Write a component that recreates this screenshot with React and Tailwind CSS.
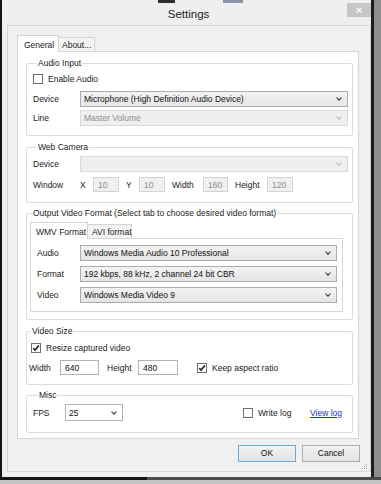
import React from 'react';
import clsx from 'clsx';

function Chevron({ disabled }) {
  return (
    <svg width="6" height="4" viewBox="0 0 6 4" className="shrink-0">
      <path d="M0.5 0.5 L3 3.2 L5.5 0.5" fill="none" stroke={disabled ? '#b9b9b9' : '#333'} strokeWidth="1.1" />
    </svg>
  );
}

function Combo({ value, className, disabled, white }) {
  return (
    <div
      className={clsx(
        'flex items-center justify-between border pl-[3px] pr-[5px]',
        disabled
          ? 'border-[#dadada] bg-[#efefef] text-[#8d8d8d]'
          : white
          ? 'border-[#b3b3b3] bg-white text-[#111]'
          : 'border-[#acacac] bg-linear-to-b from-[#f3f3f3] to-[#e5e5e5] text-[#111]',
        className
      )}
    >
      <span className="truncate">{value}</span>
      <Chevron disabled={disabled} />
    </div>
  );
}

function Field({ value, className, disabled }) {
  return (
    <div
      className={clsx(
        'flex items-center border pl-[4px] h-[15px]',
        disabled ? 'border-[#d3d3d3] bg-[#f0f0f0] text-[#8d8d8d]' : 'border-[#b3b3b3] bg-white text-[#111]',
        className
      )}
    >
      {value}
    </div>
  );
}

function Check({ checked }) {
  return (
    <span className="flex items-center justify-center w-[10px] h-[10px] border border-[#6f6f6f] bg-white shrink-0">
      {checked && (
        <svg width="8" height="8" viewBox="0 0 8 8">
          <path d="M1.2 4.2 L3.1 6.1 L6.9 1.4" fill="none" stroke="#1e1e1e" strokeWidth="1.6" />
        </svg>
      )}
    </span>
  );
}

export default function App() {
  return (
    <div className="w-[381px] h-[484px] flex flex-col bg-[#bdbdbd] font-['Liberation_Sans',Arial,sans-serif] text-[8.5px] leading-[10px] text-[#1a1a1a] whitespace-nowrap overflow-hidden">
      <div className="flex h-[477px]">
        <div className="w-[2px] bg-[#151515]" />

        {/* window */}
        <div className="w-[369px] flex flex-col bg-[#efefef] relative">
          <div className="absolute top-0 left-[156px] w-[17px] h-[3px] bg-[#2d2d2d]" />
          <div className="absolute top-0 left-[221px] w-[20px] h-[3px] bg-[#8797a8]" />

          <div className="grid grid-cols-[1fr_auto_1fr] h-[25px]">
            <div />
            <div className="pl-[4px] pt-[7px] text-[11.5px] leading-[14px] text-[#222]">Settings</div>
            <div className="flex justify-end">
              <div className="mt-[3px] w-[24px] h-[14px] bg-[#c7c7c7] flex items-center justify-center text-white text-[11px] leading-[11px] font-bold">
                ×
              </div>
            </div>
          </div>

          {/* client area */}
          <div className="ml-[5px] w-[364px] h-[447px] border border-[#d6d6d6] bg-[#f0f0f0] flex flex-col pl-[9px] pt-[9px]">
            {/* tabs */}
            <div className="flex items-end h-[16px]">
              <div className="relative z-10 -mb-px h-[17px] w-[42px] border border-b-0 border-[#d3d3d3] bg-white pl-[6px] pt-[4px]">
                General
              </div>
              <div className="h-[14px] w-[36px] border border-l-0 border-b-0 border-[#d3d3d3] bg-[#f4f4f4] pl-[3px] pt-[2px]">
                About...
              </div>
            </div>

            <div className="w-[342px] h-[388px] border border-[#d6d6d6] bg-white pl-[8px] flex flex-col">
              {/* Audio Input */}
              <fieldset className="mt-[6px] w-[327px] border border-[#dcdcdc] rounded-[2px] pl-[6px] pr-[4px] pb-[9px]">
                <legend className="ml-[4px] px-[1px] leading-[10px]">Audio Input</legend>
                <div className="mt-[6px] h-[10px] flex items-center">
                  <Check />
                  <span className="ml-[5px]">Enable Audio</span>
                </div>
                <div className="mt-[7px] flex items-center">
                  <span className="w-[47px]">Device</span>
                  <Combo value="Microphone (High Definition Audio Device)" className="w-[268px] h-[16px]" />
                </div>
                <div className="mt-[3px] flex items-center">
                  <span className="w-[47px]">Line</span>
                  <Combo value="Master Volume" disabled className="w-[268px] h-[16px]" />
                </div>
              </fieldset>

              {/* Web Camera */}
              <fieldset className="mt-[6px] w-[327px] border border-[#dcdcdc] rounded-[2px] pl-[6px] pr-[4px] pb-[10px]">
                <legend className="ml-[4px] px-[1px] leading-[10px]">Web Camera</legend>
                <div className="mt-[4px] flex items-center">
                  <span className="w-[47px]">Device</span>
                  <Combo value="" disabled className="w-[268px] h-[16px]" />
                </div>
                <div className="mt-[5px] flex items-center h-[15px]">
                  <span className="w-[47px]">Window</span>
                  <span className="w-[13px]">X</span>
                  <Field value="10" disabled className="w-[26px]" />
                  <span className="ml-[7px] w-[13px]">Y</span>
                  <Field value="10" disabled className="w-[26px]" />
                  <span className="ml-[7px] w-[31px]">Width</span>
                  <Field value="160" disabled className="w-[25px]" />
                  <span className="ml-[7px] w-[32px]">Height</span>
                  <Field value="120" disabled className="w-[26px]" />
                </div>
              </fieldset>

              {/* Output Video Format */}
              <fieldset className="mt-[5px] w-[327px] border border-[#dcdcdc] rounded-[2px] pl-[3px] pb-[7px]">
                <legend className="ml-[2px] px-[1px] leading-[10px]">
                  Output Video Format (Select tab to choose desired video format)
                </legend>
                <div className="mt-[4px] flex items-end h-[16px]">
                  <div className="relative z-10 -mb-px h-[17px] w-[58px] border border-b-0 border-[#d3d3d3] bg-white pl-[5px] pt-[4px]">
                    WMV Format
                  </div>
                  <div className="h-[14px] w-[44px] border border-l-0 border-b-0 border-[#d3d3d3] bg-[#f4f4f4] pl-[4px] pt-[2px]">
                    AVI format
                  </div>
                </div>
                <div className="w-[313px] border border-[#d6d6d6] bg-white pl-[6px] pt-[6px] pb-[8px] flex flex-col">
                  <div className="flex items-center">
                    <span className="w-[43px]">Audio</span>
                    <Combo value="Windows Media Audio 10 Professional" className="w-[257px] h-[16px]" />
                  </div>
                  <div className="mt-[5px] flex items-center">
                    <span className="w-[43px]">Format</span>
                    <Combo value="192 kbps, 88 kHz, 2 channel 24 bit CBR" className="w-[257px] h-[16px]" />
                  </div>
                  <div className="mt-[5px] flex items-center">
                    <span className="w-[43px]">Video</span>
                    <Combo value="Windows Media Video 9" className="w-[257px] h-[16px]" />
                  </div>
                </div>
              </fieldset>

              {/* Video Size */}
              <fieldset className="mt-[6px] w-[327px] border border-[#dcdcdc] rounded-[2px] pl-[2px] pb-[9px]">
                <legend className="ml-[2px] px-[1px] leading-[10px]">Video Size</legend>
                <div className="mt-[7px] h-[10px] flex items-center pl-[2px]">
                  <Check checked />
                  <span className="ml-[5px]">Resize captured video</span>
                </div>
                <div className="mt-[7px] h-[15px] flex items-center">
                  <span className="w-[31px]">Width</span>
                  <Field value="640" className="w-[39px]" />
                  <span className="ml-[8px] w-[31px]">Height</span>
                  <Field value="480" className="w-[40px]" />
                  <span className="ml-[19px]">
                    <Check checked />
                  </span>
                  <span className="ml-[5px]">Keep aspect ratio</span>
                </div>
              </fieldset>

              {/* Misc */}
              <fieldset className="mt-[5px] w-[327px] border border-[#dcdcdc] rounded-[2px] pl-[6px] pb-[11px]">
                <legend className="ml-[5px] px-[1px] leading-[10px]">Misc</legend>
                <div className="mt-[4px] h-[17px] flex items-center">
                  <span className="w-[32px]">FPS</span>
                  <Combo value="25" white className="w-[58px] h-[17px]" />
                  <span className="ml-[120px]">
                    <Check />
                  </span>
                  <span className="ml-[5px] w-[52px]">Write log</span>
                  <span className="text-[#1034d8] underline">View log</span>
                </div>
              </fieldset>
            </div>

            {/* buttons */}
            <div className="mt-[6px] flex justify-end gap-[6px] pr-[10px] h-[17px]">
              <button className="w-[58px] h-[17px] border border-[#6fa8e2] bg-linear-to-b from-[#f2f2f2] to-[#e3e3e3] text-[#111] leading-[15px]">
                OK
              </button>
              <button className="w-[58px] h-[17px] border border-[#acacac] bg-linear-to-b from-[#f2f2f2] to-[#e3e3e3] text-[#111] leading-[15px]">
                Cancel
              </button>
            </div>
            <div className="mt-[1px] flex justify-end pr-[2px] h-[7px]">
              <svg width="7" height="7" viewBox="0 0 7 7">
                <rect x="5" y="1" width="1" height="1" fill="#a0a0a0" />
                <rect x="3" y="3" width="1" height="1" fill="#a0a0a0" />
                <rect x="5" y="3" width="1" height="1" fill="#a0a0a0" />
                <rect x="1" y="5" width="1" height="1" fill="#a0a0a0" />
                <rect x="3" y="5" width="1" height="1" fill="#a0a0a0" />
                <rect x="5" y="5" width="1" height="1" fill="#a0a0a0" />
              </svg>
            </div>
          </div>
        </div>

        <div className="w-[3px] bg-[#1c1c1c]" />
        <div className="flex-1 bg-[#8e8e8e]" />
      </div>
      <div className="flex h-[3px]">
        <div className="w-[147px] bg-[#151515]" />
        <div className="flex-1 bg-[#4a4a4a]" />
      </div>
      <div className="flex-1 bg-[#c4c4c4]" />
    </div>
  );
}
